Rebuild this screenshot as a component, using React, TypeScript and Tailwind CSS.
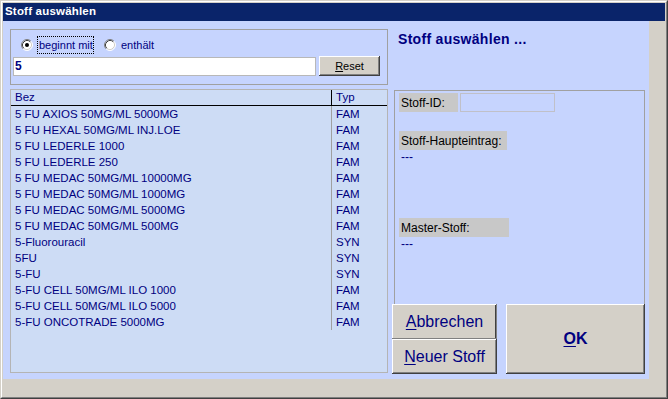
import type { ReactNode } from "react";

interface Substance {
  name: string;
  type: "FAM" | "SYN";
}

const substances: Substance[] = [
  { name: "5 FU AXIOS 50MG/ML 5000MG", type: "FAM" },
  { name: "5 FU HEXAL 50MG/ML INJ.LOE", type: "FAM" },
  { name: "5 FU LEDERLE 1000", type: "FAM" },
  { name: "5 FU LEDERLE 250", type: "FAM" },
  { name: "5 FU MEDAC 50MG/ML 10000MG", type: "FAM" },
  { name: "5 FU MEDAC 50MG/ML 1000MG", type: "FAM" },
  { name: "5 FU MEDAC 50MG/ML 5000MG", type: "FAM" },
  { name: "5 FU MEDAC 50MG/ML 500MG", type: "FAM" },
  { name: "5-Fluorouracil", type: "SYN" },
  { name: "5FU", type: "SYN" },
  { name: "5-FU", type: "SYN" },
  { name: "5-FU CELL 50MG/ML ILO 1000", type: "FAM" },
  { name: "5-FU CELL 50MG/ML ILO 5000", type: "FAM" },
  { name: "5-FU ONCOTRADE 5000MG", type: "FAM" },
];

const raised =
  "bg-[#d4d0c8] shadow-[inset_-1px_-1px_#404040,inset_1px_1px_#ffffff,inset_-2px_-2px_#808080]";

function Radio({ checked }: { checked?: boolean }) {
  return (
    <svg width="12" height="12" viewBox="0 0 12 12" className="shrink-0">
      <circle cx="6" cy="6" r="5" fill="#ffffff" />
      <path d="M2.11 9.89 A5.5 5.5 0 0 1 9.89 2.11" fill="none" stroke="#808080" />
      <path d="M9.89 2.11 A5.5 5.5 0 0 1 2.11 9.89" fill="none" stroke="#ffffff" />
      <path d="M2.82 9.18 A4.5 4.5 0 0 1 9.18 2.82" fill="none" stroke="#404040" />
      <path d="M9.18 2.82 A4.5 4.5 0 0 1 2.82 9.18" fill="none" stroke="#d4d0c8" />
      {checked && <circle cx="6" cy="6" r="2" fill="#000000" />}
    </svg>
  );
}

function Label({ children, width }: { children: ReactNode; width: string }) {
  return (
    <div
      className={`flex h-[19px] items-center bg-[#c8c8c8] pl-[2px] text-[12px] text-black ${width}`}
    >
      {children}
    </div>
  );
}

export default function App() {
  return (
    <div className="h-[399px] w-[668px] border border-t-[#d4d0c8] border-l-[#d4d0c8] border-r-[#404040] border-b-[#404040] font-['Liberation_Sans',Arial,sans-serif]">
      <div className="flex h-full w-full flex-col border border-t-white border-l-white border-r-[#808080] border-b-[#808080] bg-[#d4d0c8] p-px">
        {/* title bar */}
        <div className="flex h-[18px] shrink-0 items-center bg-[#0a246a] pl-[2px] text-[11.5px] font-bold tracking-[0.2px] text-white">
          Stoff auswählen
        </div>

        <div className="flex">
          <div className="flex h-[358px] w-[646px] gap-[4px] bg-[#c6d4fe] pt-[8px] pl-[7px]">
            {/* left column */}
            <div className="flex w-[378px] flex-col gap-[4px]">
              <div className="h-[56px] border border-[#a0a0a0] pt-[6px] pl-[2px]">
                <div className="flex h-[18px] items-center pl-[8px] text-[11px] whitespace-nowrap text-[#000080]">
                  <Radio checked />
                  <span className="ml-[4px] flex h-[18px] w-[57px] items-center border border-dotted border-black pl-[1px]">
                    beginnt mit
                  </span>
                  <span className="ml-[10px] flex">
                    <Radio />
                  </span>
                  <span className="ml-[5px]">enthält</span>
                </div>
                <div className="mt-[2px] flex items-center">
                  <div className="flex h-[19px] w-[303px] items-center border border-[#b8b8b8] bg-white pl-[1px] text-[12px] font-bold text-[#000080]">
                    5
                  </div>
                  <button
                    type="button"
                    className={`ml-[3px] h-[20px] w-[61px] text-[11px] text-black ${raised}`}
                  >
                    <span className="underline underline-offset-1">R</span>eset
                  </button>
                </div>
              </div>

              <div className="h-[284px] border border-[#b4b4b4] bg-[#cddcf5] text-[11.5px] text-[#000080]">
                <div className="flex h-[16px] border-b border-black leading-[15px]">
                  <div className="w-[321px] border-r border-black pl-[4px]">Bez</div>
                  <div className="pl-[4px]">Typ</div>
                </div>
                {substances.map((substance) => (
                  <div key={substance.name} className="flex h-[16px] leading-[16px]">
                    <div className="w-[321px] border-r border-[#a0a0a0] pl-[4px]">
                      {substance.name}
                    </div>
                    <div className="pl-[4px]">{substance.type}</div>
                  </div>
                ))}
              </div>
            </div>

            {/* right column */}
            <div className="flex w-[253px] flex-col">
              <div className="h-[61px] pt-[2px] pl-[6px] text-[14px] leading-[16px] font-bold tracking-[0.3px] text-[#000080]">
                Stoff auswählen ...
              </div>

              <div className="ml-[2px] h-[214px] w-[251px] border border-b-0 border-[#a0a0a0] pt-[2px] pl-[4px]">
                <div className="flex gap-[2px]">
                  <Label width="w-[59px]">Stoff-ID:</Label>
                  <div className="h-[19px] w-[95px] border border-[#c0c0c8]" />
                </div>

                <div className="mt-[19px]">
                  <Label width="w-[108px]">Stoff-Haupteintrag:</Label>
                  <div className="pl-[2px] text-[12px] leading-[14px] text-[#000080]">---</div>
                </div>

                <div className="mt-[54px]">
                  <Label width="w-[110px]">Master-Stoff:</Label>
                  <div className="pl-[2px] text-[12px] leading-[14px] text-[#000080]">---</div>
                </div>
              </div>

              <div className="flex h-[70px] gap-[9px] text-[16px] text-[#000080]">
                <div className="flex w-[105px] flex-col">
                  <button
                    type="button"
                    className="h-[35px] bg-[#d4d0c8] shadow-[inset_-1px_-1px_#808080,inset_1px_1px_#ffffff,inset_-2px_0_#404040]"
                  >
                    <span className="underline underline-offset-2">A</span>bbrechen
                  </button>
                  <button type="button" className={`h-[35px] ${raised}`}>
                    <span className="underline underline-offset-2">N</span>euer Stoff
                  </button>
                </div>
                <button type="button" className={`w-[139px] font-bold ${raised}`}>
                  <span className="underline underline-offset-2">O</span>K
                </button>
              </div>
            </div>
          </div>
          <div className="flex-1" />
        </div>
      </div>
    </div>
  );
}
